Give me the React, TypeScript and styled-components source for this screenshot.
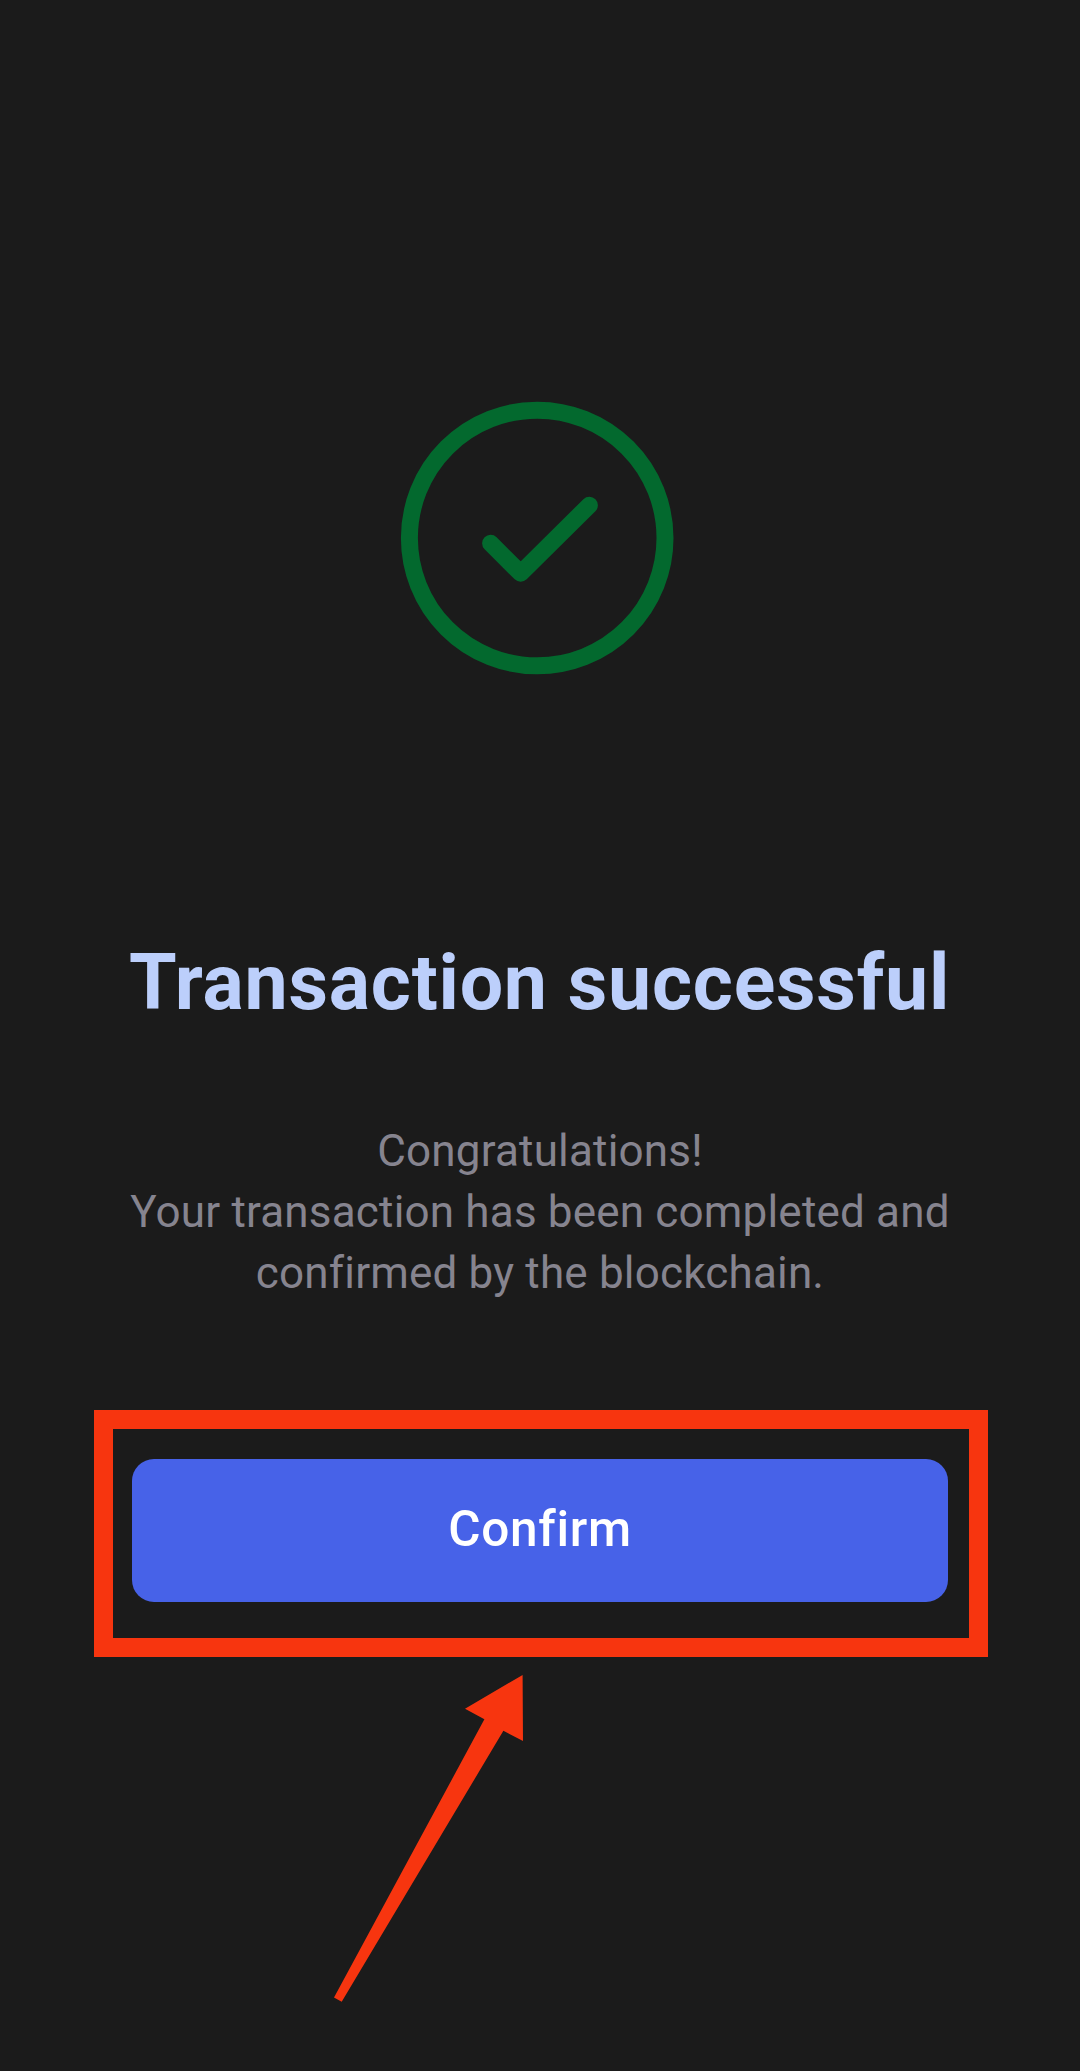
import React from "react";
import styled, { createGlobalStyle } from "styled-components";

const GlobalStyle = createGlobalStyle`
  *, *::before, *::after {
    box-sizing: border-box;
  }

  body {
    margin: 0;
    background: #1b1b1b;
    font-family: Roboto, "Noto Sans", sans-serif;
  }
`;

const Screen = styled.main`
  display: flex;
  flex-direction: column;
  align-items: center;
  width: 1080px;
  height: 2071px;
  padding: 400px 92px 0;
  overflow: hidden;
  background: #1b1b1b;
`;

const StatusIcon = styled.svg`
  display: block;
  flex: none;
  width: 276px;
  height: 276px;
  margin-right: 4px;
  fill: none;
  stroke: #03692e;
  stroke-width: 17px;
  stroke-linecap: round;
  stroke-linejoin: round;
`;

const Title = styled.h1`
  flex: none;
  margin: 257px 1px 0 0;
  color: #bccffb;
  font-size: 77px;
  font-weight: 700;
  line-height: 100px;
  letter-spacing: 0.77px;
  white-space: nowrap;
`;

const Message = styled.p`
  flex: none;
  margin: 87.5px 0 0;
  color: #86848f;
  font-size: 44px;
  font-weight: 400;
  line-height: 61px;
  letter-spacing: 0.18px;
  text-align: center;
  white-space: nowrap;
`;

const Highlight = styled.section`
  flex: none;
  align-self: stretch;
  height: 247px;
  margin: 106.5px 0 0 2px;
  padding: 30px 21px 0 19px;
  border: 19px solid #f7350f;
`;

const ConfirmButton = styled.button`
  display: flex;
  align-items: center;
  justify-content: center;
  width: 816px;
  height: 143px;
  padding: 0 0 3px;
  border: 0;
  border-radius: 22px;
  background: #4762e8;
  color: #ffffff;
  font-family: inherit;
  font-size: 49.5px;
  font-weight: 500;
  letter-spacing: 0.7px;
`;

const Pointer = styled.svg`
  display: block;
  flex: none;
  align-self: flex-start;
  width: 194px;
  height: 330px;
  margin: 16px 0 0 240px;
  fill: #f7350f;
`;

export default function App() {
  return (
    <>
      <GlobalStyle />
      <Screen>
        <StatusIcon viewBox="0 0 276 276" aria-hidden="true">
          <circle cx="137.2" cy="138" r="127.8" />
          <path d="M90.6 143.3 120.7 173.3 189.4 105.2" />
        </StatusIcon>
        <Title>Transaction successful</Title>
        <Message>
          Congratulations!
          <br />
          Your transaction has been completed and
          <br />
          confirmed by the blockchain.
        </Message>
        <Highlight>
          <ConfirmButton type="button">Confirm</ConfirmButton>
        </Highlight>
        <Pointer viewBox="332 1673 194 330" aria-hidden="true">
          <path d="M522.6 1675 465 1708.7 484.4 1719.3 334 1997.5 341.7 2001.7 503.4 1730.8 523 1741Z" />
        </Pointer>
      </Screen>
    </>
  );
}
